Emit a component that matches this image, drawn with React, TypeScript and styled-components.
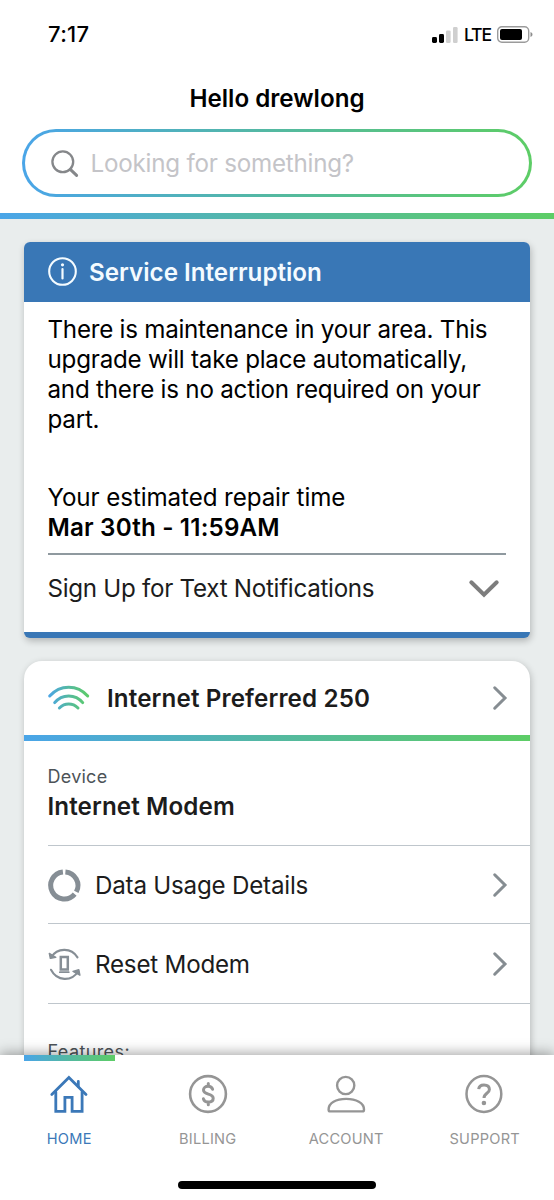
import React from "react";
import styled, { createGlobalStyle } from "styled-components";

const GlobalStyle = createGlobalStyle`
  * { box-sizing: border-box; }
  body { margin: 0; background: #e9eded; font-family: Inter, "Liberation Sans", sans-serif; }
  svg { display: block; flex: none; overflow: visible; }
  p, h1, h2, h3 { margin: 0; font-weight: 400; }
`;

const gradient = "linear-gradient(90deg, #4aa5e8 0%, #54b9a0 50%, #5dcd66 100%)";

const Screen = styled.div`
  width: 554px;
  height: 1200px;
  overflow: hidden;
  display: flex;
  flex-direction: column;
  background: #e9eded;
`;

const Text = styled.span<{ $size?: number; $line?: number; $weight?: number; $color?: string; $track?: number }>`
  display: block;
  white-space: nowrap;
  font-size: ${(p) => p.$size ?? 24.2}px;
  line-height: ${(p) => p.$line ?? 30}px;
  font-weight: ${(p) => p.$weight ?? 400};
  color: ${(p) => p.$color ?? "#1c1c1c"};
  letter-spacing: ${(p) => p.$track ?? (p.$weight ? 0 : -0.23)}px;
`;

const StatusBar = styled.div`
  height: 68px;
  flex: none;
  display: flex;
  align-items: center;
  justify-content: space-between;
  padding: 0 21px 0 48px;
`;

const StatusIcons = styled.div`
  display: flex;
  align-items: center;
  gap: 6px;
  padding-top: 1px;
`;

const Header = styled.header`
  flex: none;
  height: 219px;
  background: #fff;
  display: flex;
  flex-direction: column;
`;

const Greeting = styled.h1`
  display: flex;
  justify-content: center;
  height: 61px;
  padding-top: 16px;
`;

const SearchBox = styled.div`
  height: 68px;
  margin: 0 22px;
  padding: 1px 26px 0;
  display: flex;
  align-items: center;
  gap: 11.5px;
  border: 3px solid transparent;
  border-radius: 34px;
  background: linear-gradient(#fff, #fff) padding-box, ${gradient} border-box;
`;

const SearchText = styled.div`
  padding-top: 1px;
`;

const GradientBar = styled.div<{ $top?: number }>`
  height: 6px;
  flex: none;
  margin-top: ${(p) => p.$top ?? 0}px;
  background: ${gradient};
`;

const Content = styled.main`
  flex: 1;
  min-height: 0;
  overflow: hidden;
  padding: 23px 24px 0 23.5px;
  display: flex;
  flex-direction: column;
  gap: 23px;
`;

const AlertCard = styled.section`
  flex: none;
  height: 395.5px;
  display: flex;
  flex-direction: column;
  background: #fff;
  border-radius: 6px;
  border-bottom: 6px solid #3977b6;
  box-shadow: 1px 3px 7px rgba(0, 0, 0, 0.24);
`;

const AlertHeader = styled.div`
  height: 59.5px;
  flex: none;
  display: flex;
  align-items: center;
  gap: 12.5px;
  padding-left: 24px;
  background: #3977b6;
  border-radius: 6px 6px 0 0;
`;

const AlertTitle = styled.h2`
  padding-top: 2px;
`;

const AlertBody = styled.div`
  padding: 13px 24px 0;
  flex: 1;
`;

const RepairTime = styled.div`
  margin-top: 48px;
  height: 72.5px;
  border-bottom: 2px solid #8f999f;
`;

const SignUpRow = styled.div`
  height: 67px;
  display: flex;
  align-items: center;
  justify-content: space-between;
  padding-right: 7px;
`;

const PlanCard = styled.section`
  flex: none;
  height: 480px;
  background: #fff;
  border-radius: 18px 18px 0 0;
  box-shadow: 1px 2px 7px rgba(0, 0, 0, 0.22);
`;

const PlanHeader = styled.div`
  height: 74px;
  display: flex;
  align-items: center;
  padding: 0 23px 0 24px;
`;

const PlanTitle = styled.h2`
  flex: 1;
  margin-left: 18.5px;
  padding-top: 2px;
`;

const Device = styled.div`
  height: 105px;
  margin-left: 24px;
  padding-top: 24px;
  border-bottom: 1.5px solid #bfc6cc;
`;

const LinkRow = styled.div<{ $height: number }>`
  height: ${(p) => p.$height}px;
  margin-left: 24px;
  padding: 2px 23px 0 0;
  display: flex;
  align-items: center;
  border-bottom: 1.5px solid #bfc6cc;
`;

const LinkLabel = styled.div`
  flex: 1;
  margin-left: 14.5px;
  padding-top: 1px;
`;

const Features = styled.div`
  padding: 36px 24px 0;
`;

const TabBar = styled.nav`
  position: relative;
  flex: none;
  height: 145px;
  background: #fff;
  box-shadow: 0 -2px 12px rgba(0, 0, 0, 0.35);
  display: flex;
  flex-direction: column;
`;

const ActiveMark = styled.div`
  width: 91px;
  height: 6px;
  margin-left: 24px;
  background: ${gradient};
`;

const Tabs = styled.div`
  height: 120px;
  display: grid;
  grid-template-columns: repeat(4, 138.5px);
`;

const Tab = styled.div`
  display: flex;
  flex-direction: column;
  align-items: center;
  padding-top: 13px;
  gap: 15px;
`;

const HomeIndicator = styled.div`
  width: 198px;
  height: 7.5px;
  flex: none;
  align-self: center;
  border-radius: 4px;
  background: #000;
`;

const Signal = () => (
  <svg width="26" height="16" viewBox="0 0 26 16">
    <rect x="0" y="10" width="5" height="6" rx="1.4" />
    <rect x="7" y="7" width="5" height="9" rx="1.4" />
    <rect x="14" y="3.5" width="4.6" height="12.5" rx="1.3" fill="#cfcfcf" />
    <rect x="21" y="0" width="4.6" height="16" rx="1.3" fill="#cfcfcf" />
  </svg>
);

const Battery = () => (
  <svg width="36" height="17" viewBox="0 0 36 17">
    <rect x="0.7" y="0.7" width="31" height="15.6" rx="4.2" fill="none" stroke="#9b9b9b" strokeWidth="1.4" />
    <rect x="3" y="3" width="22" height="11" rx="2" />
    <path d="M33.5 6v5c1.2-.4 2-1.4 2-2.5s-.8-2.1-2-2.5z" fill="#8d8d8d" />
  </svg>
);

const SearchIcon = () => (
  <svg width="28" height="28" viewBox="0 0 28 28" fill="none" stroke="#85878a" strokeLinecap="round">
    <circle cx="11.8" cy="11.800" r="10.400" strokeWidth="2.300" />
    <path d="M19.300 19.300 25.600 25.400" strokeWidth="3" />
  </svg>
);

const InfoIcon = () => (
  <svg width="29" height="29" viewBox="0 0 29 29" fill="none" stroke="#f4fbff">
    <circle cx="14.5" cy="14.5" r="13.3" strokeWidth="2.1" />
    <path d="M14.500 12v9.500" strokeWidth="2.200" strokeLinecap="round" />
    <circle cx="14.5" cy="7.8" r="1.6" fill="#f4fbff" stroke="none" />
  </svg>
);

const ChevronDown = () => (
  <svg width="30" height="18" viewBox="0 0 30 18" fill="none" stroke="#7d7d7d" strokeWidth="4" strokeLinecap="round" strokeLinejoin="miter">
    <path d="M2.300 2.300 15 14.600 27.700 2.300" />
  </svg>
);

const ChevronRight = () => (
  <svg width="14" height="24" viewBox="0 0 14 24" fill="none" stroke="#868d92" strokeWidth="3" strokeLinecap="round">
    <path d="M1.700 1.800 12 12 1.700 22.200" />
  </svg>
);

const WifiIcon = () => (
  <svg width="41" height="25" viewBox="0 0 41 25" fill="none" stroke="url(#wifi)" strokeWidth="3" strokeLinecap="round">
    <defs>
      <linearGradient id="wifi" gradientUnits="userSpaceOnUse" x1="0" y1="0" x2="41" y2="0">
        <stop offset="0" stopColor="#4aa5e8" />
        <stop offset="0.5" stopColor="#54b9a0" />
        <stop offset="1" stopColor="#5dcd66" />
      </linearGradient>
    </defs>
    <path d="M1.700 11C6.800 5.200 13.400 2.200 20.700 2.200S34.600 5.200 39.700 11" />
    <path d="M6.700 17.600C10.300 13.200 15.200 10.900 20.700 10.900S31.100 13.200 34.700 17.600" />
    <path d="M11.400 23C14.100 20.400 17.100 19.100 20.700 19.100S27.300 20.400 30 23" />
  </svg>
);

const UsageIcon = () => (
  <svg width="33" height="33" viewBox="0 0 33 33" fill="none" stroke="#868e95" strokeWidth="5">
    <path d="M17.4 2.900A13.600 13.600 0 0 1 28.300 22.900" />
    <path d="M26.700 25.200A13.600 13.600 0 1 1 14.900 2.900" />
  </svg>
);

const ResetIcon = () => (
  <svg width="33" height="33" viewBox="0 0 33 33" fill="none" stroke="#868e95" strokeWidth="2.100" strokeLinecap="round" strokeLinejoin="round">
    <path d="M3.200 9.200C9 0 23 -1.200 29.500 9.400" />
    <path d="M3 21.800C9 33.400 23.500 34 30.300 23.200" />
    <path d="M1.300 5.400 2.300 10.400 7.800 9.400ZM31.900 27.200 30.800 21.600 25 23.400Z" fill="#868e95" strokeWidth="1.400" />
    <path d="M12.800 9h7v12.400h-7z" strokeWidth="2.500" strokeLinejoin="miter" />
    <path d="M11.800 24.200h9" strokeWidth="1.700" />
  </svg>
);

const HomeIcon = () => (
  <svg width="39" height="40" viewBox="0 0 39 40" fill="none" stroke="#3b78b8" strokeWidth="2.800" strokeLinejoin="miter" strokeLinecap="round">
    <path d="M1.800 20.600 18.900 3.500 36 20.600" />
    <path d="M5.800 18V37.400h9.100V23.300h7.200V37.400h10V18M28.300 7.500v5" />
  </svg>
);

const BillingIcon = () => (
  <svg width="39" height="40" viewBox="0 0 39 40" fill="none" stroke="#959595" strokeWidth="2.600" strokeLinecap="round">
    <circle cx="20" cy="20" r="17.900" />
    <path d="M24.600 15.300c-.7-2-2.300-3-4.500-3-2.700 0-4.600 1.500-4.600 3.700 0 5.300 9.700 2.900 9.700 8.200 0 2.500-2.100 3.900-5 3.900-2.500 0-4.200-1.200-4.800-3.300M20.300 9.500v2.300M20.300 28.500v2.300" strokeWidth="3" />
  </svg>
);

const AccountIcon = () => (
  <svg width="39" height="40" viewBox="0 0 39 40" fill="none" stroke="#959595" strokeWidth="2.400" strokeLinejoin="round">
    <circle cx="18.700" cy="11.500" r="8.600" />
    <path d="M3.200 37.400C2 37.400 1.600 36.500 1.600 35.400 1.600 28.800 9 24.900 19.100 24.900S37 28.800 37 35.400C37 36.500 36.500 37.400 35.400 37.400Z" />
  </svg>
);

const SupportIcon = () => (
  <svg width="39" height="40" viewBox="0 0 39 40" fill="none" stroke="#959595" strokeWidth="2.500">
    <ellipse cx="18.900" cy="20" rx="17.400" ry="17.900" />
    <path d="M13.700 15.200c.2-2.800 2.300-4.300 5.300-4.300 3.200 0 5.400 1.700 5.400 4.500 0 4-5.400 3.800-5.400 8.600" strokeWidth="3" />
    <circle cx="18.900" cy="29" r="2.300" fill="#959595" stroke="none" />
  </svg>
);

const tabs = [
  { label: "HOME", Icon: HomeIcon },
  { label: "BILLING", Icon: BillingIcon },
  { label: "ACCOUNT", Icon: AccountIcon },
  { label: "SUPPORT", Icon: SupportIcon },
];

export default function App() {
  return (
    <Screen>
      <GlobalStyle />
      <Header>
        <StatusBar>
          <Text $size={22} $weight={500} $color="#000" $track={0.3}>7:17</Text>
          <StatusIcons>
            <Signal />
            <Text $size={17.6} $weight={500} $color="#000" $track={-1.1}>LTE</Text>
            <Battery />
          </StatusIcons>
        </StatusBar>
        <Greeting>
          <Text $weight={600} $color="#000">Hello drewlong</Text>
        </Greeting>
        <SearchBox>
          <SearchIcon />
          <SearchText>
            <Text $color="#c4c4c8">Looking for something?</Text>
          </SearchText>
        </SearchBox>
        <GradientBar $top={16} />
      </Header>
      <Content>
        <AlertCard>
          <AlertHeader>
            <InfoIcon />
            <AlertTitle>
              <Text $weight={600} $color="#f4fbff">Service Interruption</Text>
            </AlertTitle>
          </AlertHeader>
          <AlertBody>
            <Text $color="#000" $track={-0.26}>There is maintenance in your area. This</Text>
            <Text $color="#000">upgrade will take place automatically,</Text>
            <Text $color="#000">and there is no action required on your</Text>
            <Text $color="#000">part.</Text>
            <RepairTime>
              <Text $color="#000" $track={-0.1}>Your estimated repair time</Text>
              <Text $color="#000" $weight={600} $track={0.17}>Mar 30th - 11:59AM</Text>
            </RepairTime>
            <SignUpRow>
              <Text $track={-0.29}>Sign Up for Text Notifications</Text>
              <ChevronDown />
            </SignUpRow>
          </AlertBody>
        </AlertCard>
        <PlanCard>
          <PlanHeader>
            <WifiIcon />
            <PlanTitle>
              <Text $weight={600} $track={0.12}>Internet Preferred 250</Text>
            </PlanTitle>
            <ChevronRight />
          </PlanHeader>
          <GradientBar />
          <Device>
            <Text $size={18} $line={24} $color="#4d5358" $track={0.25}>Device</Text>
            <Text $weight={600} $line={36} $track={0.1}>Internet Modem</Text>
          </Device>
          <LinkRow $height={78}>
            <UsageIcon />
            <LinkLabel><Text>Data Usage Details</Text></LinkLabel>
            <ChevronRight />
          </LinkRow>
          <LinkRow $height={80}>
            <ResetIcon />
            <LinkLabel><Text>Reset Modem</Text></LinkLabel>
            <ChevronRight />
          </LinkRow>
          <Features>
            <Text $size={18} $line={24} $color="#4d5358" $track={0.4}>Features:</Text>
          </Features>
        </PlanCard>
      </Content>
      <TabBar>
        <ActiveMark />
        <Tabs>
          {tabs.map(({ label, Icon }, i) => (
            <Tab key={label}>
              <Icon />
              <Text $size={14.6} $line={20} $track={0.25} $color={i === 0 ? "#3b78b8" : "#959595"}>{label}</Text>
            </Tab>
          ))}
        </Tabs>
        <HomeIndicator />
      </TabBar>
    </Screen>
  );
}
